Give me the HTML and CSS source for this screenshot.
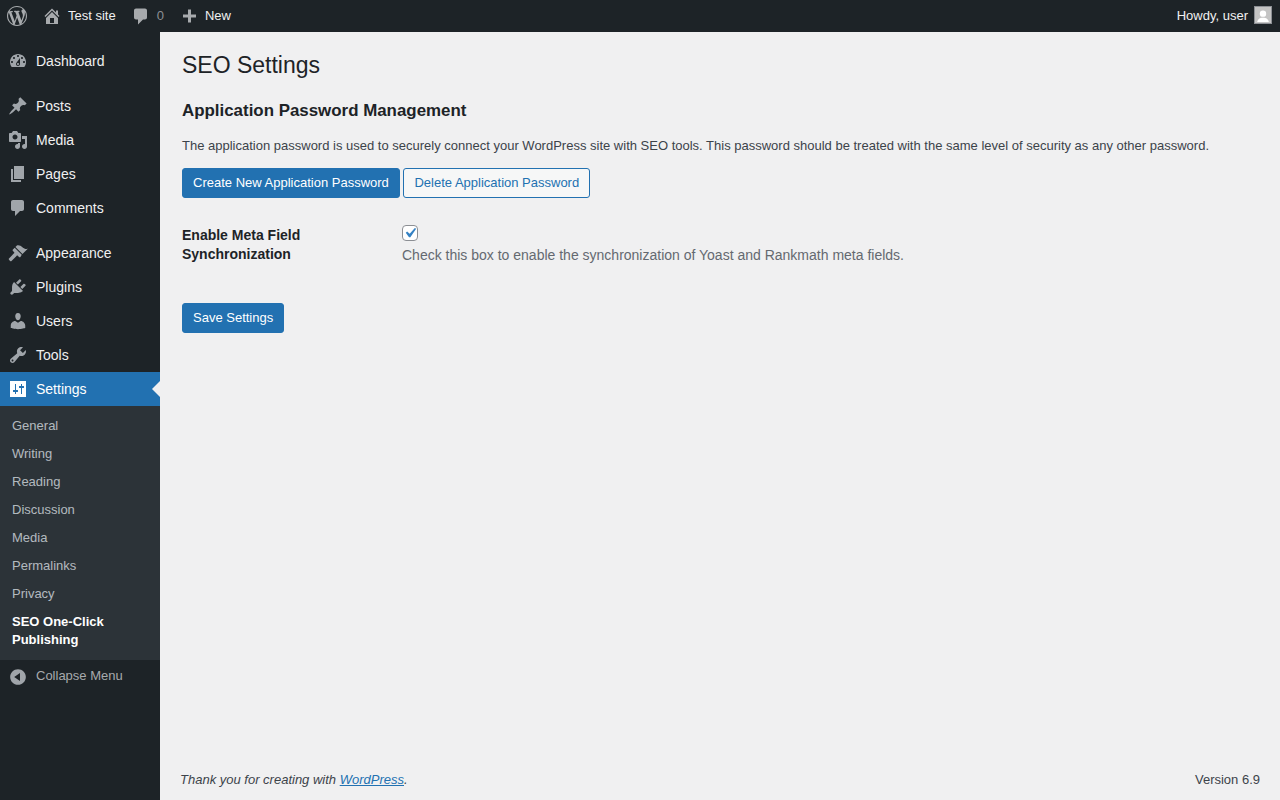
FILE: index.html
```html
<!DOCTYPE html>
<html lang="en">
<head>
  <meta charset="UTF-8" />
  <meta name="viewport" content="width=device-width, initial-scale=1.0"/>
  <title>SEO Settings</title>
  <link rel="stylesheet" href="styles.css">
</head>
<body>

  <div class="adminbar">
    <svg class="bar-icon" viewBox="0 0 20 20"><path d="M20 10c0-5.51-4.49-10-10-10C4.48 0 0 4.49 0 10c0 5.52 4.48 10 10 10 5.51 0 10-4.48 10-10zM7.78 15.37L4.37 6.22c.55-.02 1.17-.08 1.17-.08.5-.06.44-1.13-.06-1.11 0 0-1.45.11-2.37.11-.18 0-.37 0-.58-.01C4.12 2.69 6.87 1.11 10 1.11c2.33 0 4.45.87 6.05 2.34-.68-.11-1.65.39-1.65 1.58 0 .74.45 1.36.9 2.1.35.61.55 1.36.55 2.46 0 1.49-1.4 5-1.4 5l-3.03-8.37c.54-.02.82-.17.82-.17.5-.05.44-1.25-.06-1.22 0 0-1.44.12-2.38.12-.87 0-2.33-.12-2.33-.12-.5-.03-.56 1.2-.06 1.22l.92.08 1.26 3.41zM17.41 10c.24-.64.74-1.87.43-4.25.7 1.29 1.05 2.71 1.05 4.25 0 3.29-1.73 6.24-4.4 7.78.97-2.59 1.94-5.2 2.92-7.78zM6.1 18.09C3.12 16.65 1.11 13.53 1.11 10c0-1.3.23-2.48.72-3.59C3.25 10.3 4.67 14.2 6.1 18.09zm4.03-6.63l2.58 6.98c-.86.29-1.76.45-2.71.45-.79 0-1.57-.11-2.29-.33.81-2.38 1.62-4.74 2.42-7.1z"/></svg>
    <a class="bar-item" href="#">
      <svg class="bar-icon" viewBox="0 0 20 20"><path d="M16 8.5l1.53 1.53-1.06 1.06L10 4.62l-6.47 6.47-1.06-1.06L10 2.5l4 4v-2h2v4zm-6-2.46l6 5.99V18H4v-5.97zM12 17v-5H8v5h4z"/></svg>
      Test site
    </a>
    <a class="bar-item bar-muted" href="#">
      <svg class="bar-icon" viewBox="0 0 20 20"><path d="M5 2h9c1.1 0 2 .9 2 2v7c0 1.1-.9 2-2 2h-2l-5 5v-5H5c-1.1 0-2-.9-2-2V4c0-1.1.9-2 2-2z" transform="translate(0 .5)"/></svg>
      0
    </a>
    <a class="bar-item" href="#">
      <svg class="bar-icon" viewBox="0 0 20 20"><path d="M17 7v3h-5v5H9v-5H4V7h5V2h3v5h5z" transform="translate(0 1.5)"/></svg>
      New
    </a>
    <a class="bar-item bar-account" href="#">
      Howdy, user
      <svg class="avatar" viewBox="0 0 18 18"><rect width="18" height="18" fill="#c4c4c4"/><circle cx="9" cy="7.5" r="3.6" fill="#fff"/><path d="M2.5 17c.3-3.6 3-5 6.5-5s6.200 1.400 6.500 5z" fill="#fff"/></svg>
    </a>
  </div>

  <div class="layout">
    <nav class="sidebar">
      <ul class="menu">
        <li><a href="#"><svg class="menu-icon" viewBox="0 0 20 20"><path d="M3.76 16h12.48c1.100-1.370 1.760-3.110 1.760-5 0-4.420-3.580-8-8-8s-8 3.580-8 8c0 1.890.66 3.630 1.760 5zM10 4c.55 0 1 .45 1 1s-.45 1-1 1-1-.45-1-1 .45-1 1-1zM6 6c.55 0 1 .45 1 1s-.45 1-1 1-1-.45-1-1 .45-1 1-1zm8 0c.55 0 1 .45 1 1s-.45 1-1 1-1-.45-1-1 .45-1 1-1zm-5.370 5.550L12 7v6c0 1.100-.9 2-2 2s-2-.9-2-2c0-.57.24-1.080.63-1.450zM4 10c.55 0 1 .45 1 1s-.45 1-1 1-1-.45-1-1 .45-1 1-1zm12 0c.55 0 1 .45 1 1s-.45 1-1 1-1-.45-1-1 .45-1 1-1zm-5 3c0-.55-.45-1-1-1s-1 .45-1 1 .45 1 1 1 1-.45 1-1z" fill-rule="evenodd"/></svg>Dashboard</a></li>
        <li class="menu-sep"><a href="#"><svg class="menu-icon" viewBox="0 0 20 20"><path d="M10.440 3.020l1.820-1.820 6.360 6.350-1.830 1.820c-1.050-.68-2.480-.57-3.410.36l-.75.75c-.92.93-1.040 2.350-.35 3.410l-1.830 1.820-2.410-2.410-2.800 2.790c-.42.42-3.380 2.710-3.800 2.290s1.860-3.390 2.280-3.810l2.790-2.790L4.100 9.360l1.830-1.820c1.050.69 2.480.57 3.400-.36l.75-.75c.93-.92 1.050-2.350.36-3.410z"/></svg>Posts</a></li>
        <li><a href="#"><svg class="menu-icon" viewBox="0 0 20 20"><path d="M13 11V4c0-.55-.45-1-1-1h-1.670L9 1H5L3.670 3H2c-.55 0-1 .45-1 1v7c0 .55.45 1 1 1h10c.55 0 1-.45 1-1zM7 4.500c1.380 0 2.500 1.120 2.500 2.500S8.380 9.500 7 9.500 4.500 8.380 4.500 7 5.620 4.500 7 4.500zM14 6h5v10.500c0 1.380-1.120 2.500-2.500 2.500S14 17.880 14 16.500s1.120-2.500 2.500-2.500c.17 0 .34.02.5.05V9h-3V6zm-4 8.050V13h2v3.500c0 1.380-1.120 2.500-2.500 2.500S7 17.880 7 16.500 8.120 14 9.500 14c.17 0 .34.02.5.05z"/></svg>Media</a></li>
        <li><a href="#"><svg class="menu-icon" viewBox="0 0 20 20"><path d="M6 15V2h10v13H6zm-1 1h8v2H3V5h2v11z"/></svg>Pages</a></li>
        <li><a href="#"><svg class="menu-icon" viewBox="0 0 20 20"><path d="M5 2h9c1.100 0 2 .9 2 2v7c0 1.100-.9 2-2 2h-2l-5 5v-5H5c-1.100 0-2-.9-2-2V4c0-1.100.9-2 2-2z"/></svg>Comments</a></li>
        <li class="menu-sep"><a href="#"><svg class="menu-icon" viewBox="0 0 20 20"><path d="M14.480 11.060L7.410 3.990l1.500-1.500c.5-.56 2.300-.47 3.510.32 1.210.8 1.430 1.280 2.910 2.100 1.180.64 2.450 1.260 4.450.85zm-.71.71L6.700 4.700 4.930 6.470c-.39.39-.39 1.020 0 1.410l1.060 1.060c.39.39.39 1.030 0 1.420L1 15.400c-.4.4-.4 1 0 1.400l1.100 1.100c.4.4 1 .4 1.400 0l5.050-5c.39-.39 1.030-.39 1.420 0l1.060 1.060c.39.39 1.020.39 1.410 0z"/></svg>Appearance</a></li>
        <li><a href="#"><svg class="menu-icon" viewBox="0 0 20 20"><path d="M13.110 4.360L9.870 7.600 8 5.730l3.240-3.240c.35-.34 1.050-.2 1.560.32.52.51.66 1.210.31 1.550zm-8 1.770l.91-1.120 9.010 9.010-1.190.84c-.71.71-2.630 1.160-3.820 1.160H6.140L4.900 17.260c-.59.59-1.540.59-2.120 0-.59-.58-.59-1.530 0-2.120l1.240-1.240v-3.880c0-1.130.4-3.190 1.090-3.890zm7.260 3.970l3.240-3.240c.34-.35 1.040-.21 1.550.31.52.51.66 1.210.31 1.550l-3.240 3.250z"/></svg>Plugins</a></li>
        <li><a href="#"><svg class="menu-icon" viewBox="0 0 20 20"><path d="M10 9.250c-2.270 0-2.730-3.440-2.730-3.440C7 4.020 7.820 2 9.970 2c2.160 0 2.980 2.020 2.710 3.810 0 0-.41 3.440-2.680 3.440zm0 2.570L12.720 10c2.390 0 4.520 2.330 4.520 4.530v2.490s-3.650 1.130-7.240 1.130c-3.650 0-7.240-1.130-7.240-1.130v-2.490c0-2.250 1.940-4.480 4.470-4.480z"/></svg>Users</a></li>
        <li><a href="#"><svg class="menu-icon" viewBox="0 0 20 20"><path d="M16.680 9.770c-1.340 1.340-3.300 1.670-4.950.99l-5.410 6.520c-.99.99-2.590.99-3.580 0s-.99-2.590 0-3.570l6.520-5.420c-.68-1.650-.35-3.610.99-4.950 1.280-1.280 3.120-1.620 4.720-1.060l-2.890 2.890 2.820 2.820 2.860-2.870c.53 1.580.18 3.390-1.080 4.670zM3.810 16.210c.4.39 1.040.39 1.430 0 .4-.4.4-1.040 0-1.430-.39-.4-1.030-.4-1.430 0-.39.39-.39 1.030 0 1.430z"/></svg>Tools</a></li>
        <li class="menu-current"><a href="#"><svg class="menu-icon" viewBox="0 0 20 20"><path d="M18 16V2H2v16h16zM8 11h1.500c.55 0 .5.450.5 1s.05 1-.5 1H8v2H7v-2H5.500c-.55 0-.5-.450-.5-1s-.05-1 .5-1H7V5h1v6zm5-2h-1.500c-.55 0-.5-.450-.5-1s-.05-1 .5-1H13V5h1v2h1.500c.55 0 .5.450.5 1s.05 1-.5 1H14v6h-1V9z" fill-rule="evenodd"/></svg>Settings</a></li>
      </ul>
      <ul class="submenu">
        <li><a href="#">General</a></li>
        <li><a href="#">Writing</a></li>
        <li><a href="#">Reading</a></li>
        <li><a href="#">Discussion</a></li>
        <li><a href="#">Media</a></li>
        <li><a href="#">Permalinks</a></li>
        <li><a href="#">Privacy</a></li>
        <li class="submenu-current"><a href="#">SEO One-Click Publishing</a></li>
      </ul>
      <a class="collapse" href="#"><svg class="menu-icon" viewBox="0 0 20 20"><path d="M10 2.160c4.330 0 7.840 3.510 7.840 7.840s-3.510 7.840-7.840 7.840S2.160 14.330 2.160 10 5.710 2.160 10 2.160zm2 11.720V6.120L6.180 9.970z" fill-rule="evenodd"/></svg>Collapse Menu</a>
    </nav>

    <div class="main">
      <div class="content">
        <h1>SEO Settings</h1>
        <h2>Application Password Management</h2>
        <p class="intro">The application password is used to securely connect your WordPress site with SEO tools. This password should be treated with the same level of security as any other password.</p>
        <div class="button-row">
          <button class="btn btn-primary">Create New Application Password</button>
          <button class="btn btn-secondary">Delete Application Password</button>
        </div>

        <div class="field-row">
          <label class="field-label" for="metaSync">Enable Meta Field Synchronization</label>
          <div class="field-control">
            <input type="checkbox" id="metaSync" class="checkbox" checked>
            <p class="description">Check this box to enable the synchronization of Yoast and Rankmath meta fields.</p>
          </div>
        </div>

        <button class="btn btn-primary">Save Settings</button>
      </div>

      <div class="footer">
        <span class="thanks">Thank you for creating with <a href="#">WordPress</a>.</span>
        <span>Version 6.9</span>
      </div>
    </div>
  </div>

</body>
</html>
```

FILE: styles.css
```css
* {
  box-sizing: border-box;
}

body {
  font-family: "Liberation Sans", Arial, sans-serif;
  font-size: 13px;
  margin: 0;
  height: 800px;
  overflow: hidden;
  background-color: #f0f0f1;
  color: #3c434a;
}

a {
  text-decoration: none;
}

ul {
  margin: 0;
  padding: 0;
  list-style: none;
}

/* Admin bar */
.adminbar {
  height: 32px;
  background-color: #1d2327;
  color: #f0f0f1;
  display: flex;
  align-items: center;
  gap: 15px;
  padding: 0 8px 2px 7px;
}

.bar-item {
  display: flex;
  align-items: center;
  gap: 6px;
  color: #f0f0f1;
}

.bar-muted {
  color: #8c8f94;
}

.bar-account {
  margin-left: auto;
}

.bar-icon {
  width: 20px;
  height: 20px;
  margin-top: 2px;
  fill: #a7aaad;
}

.avatar {
  width: 18px;
  height: 18px;
  border: 1px solid #8c8f94;
}

.layout {
  display: flex;
  height: 768px;
}

/* Sidebar */
.sidebar {
  width: 160px;
  flex-shrink: 0;
  background-color: #1d2327;
  padding-top: 12px;
}

.menu a {
  display: flex;
  align-items: center;
  gap: 8px;
  height: 34px;
  padding-left: 8px;
  font-size: 14px;
  color: #f0f0f1;
}

.menu-icon {
  width: 20px;
  height: 20px;
  fill: #a0a5aa;
  flex-shrink: 0;
}

.menu-sep {
  margin-top: 11px;
}

.menu-current {
  position: relative;
  background-color: #2271b1;
}

.menu-current a {
  color: #fff;
}

.menu-current .menu-icon {
  fill: #fff;
}

.menu-current::after {
  content: '';
  position: absolute;
  right: 0;
  top: 9px;
  border: 8px solid transparent;
  border-right-color: #f0f0f1;
  border-left-width: 0;
}

.submenu {
  background-color: #2c3338;
  padding: 6px 0;
}

.submenu a {
  display: block;
  padding: 5px 12px;
  line-height: 18px;
  color: rgba(240, 246, 252, 0.7);
}

.submenu-current a {
  color: #fff;
  font-weight: 600;
}

.collapse {
  display: flex;
  align-items: flex-start;
  gap: 8px;
  padding: 8px 0 0 8px;
  line-height: 16px;
  color: #a7aaad;
}

.collapse .menu-icon {
  margin-top: -1px;
}

/* Main column */
.main {
  flex: 1;
  display: flex;
  flex-direction: column;
}

.content {
  flex: 1;
  padding: 10px 20px 0 22px;
}

h1 {
  font-size: 23px;
  font-weight: 400;
  line-height: 1.3;
  color: #1d2327;
  margin: 0;
  padding: 9px 0 4px;
}

h2 {
  font-size: 16.9px;
  line-height: 1.3;
  font-weight: 600;
  color: #1d2327;
  margin: 15px 0 0;
}

.intro {
  line-height: 1.5;
  margin: 14px 0 13px;
}

.button-row {
  display: flex;
  gap: 3.6px;
}

.btn {
  font-family: inherit;
  font-size: 13px;
  height: 30px;
  padding: 0 10px 2px;
  border-radius: 3px;
  border: 1px solid #2271b1;
  cursor: pointer;
}

.btn-primary {
  background-color: #2271b1;
  color: #fff;
}

.btn-secondary {
  background-color: #f6f7f7;
  color: #2271b1;
}

.field-row {
  display: grid;
  grid-template-columns: 220px 1fr;
  margin: 8px 0 20px;
  height: 77px;
}

.field-label {
  font-size: 14px;
  font-weight: 600;
  line-height: 1.3;
  color: #1d2327;
  padding: 20px 20px 0 0;
}

.field-control {
  padding-top: 19px;
}

.checkbox {
  appearance: none;
  display: block;
  width: 16px;
  height: 16px;
  margin: 0;
  border: 1px solid #8c8f94;
  border-radius: 4px;
  background: #fff url("data:image/svg+xml,%3Csvg xmlns='http://www.w3.org/2000/svg' viewBox='0 0 20 20'%3E%3Cpath d='M14.830 4.890l1.340.94-5.810 8.380H9.020L5.780 9.670l1.340-1.250 2.570 2.400z' fill='%233582c4'/%3E%3C/svg%3E") center / 20px no-repeat;
}

.description {
  font-size: 14px;
  line-height: 1.5;
  color: #646970;
  margin: 4px 0 0;
}

/* Footer */
.footer {
  display: flex;
  justify-content: space-between;
  padding: 0 20px 11px;
  line-height: 1.5;
}

.thanks {
  font-style: italic;
}

.thanks a {
  color: #2271b1;
  text-decoration: underline;
}
```
